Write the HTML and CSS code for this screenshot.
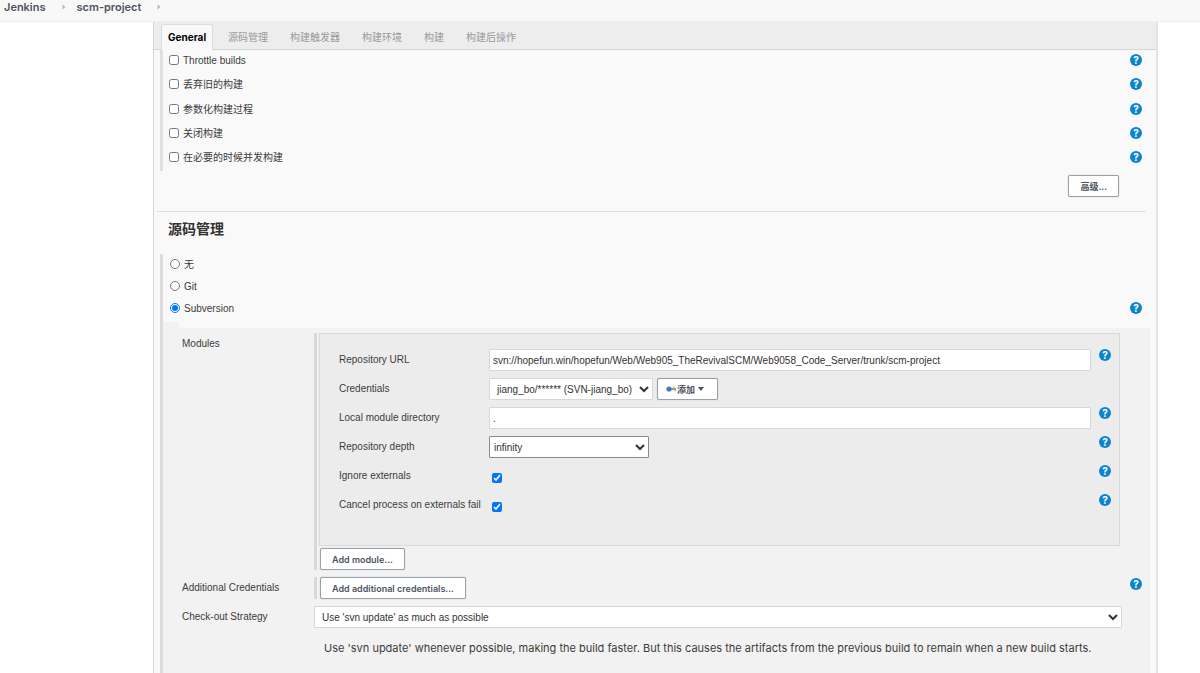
FILE: index.html
```html
<!DOCTYPE html>
<html lang="zh-CN">
  <head>
    <meta charset="UTF-8" />
    <meta name="viewport" content="width=device-width, initial-scale=1.0" />
    <title>scm-project Config [Jenkins]</title>
    <link rel="stylesheet" href="styles.css">
  </head>
  <body>
    <!-- Breadcrumbs -->
    <nav class="breadcrumbs">
      <a href="#">Jenkins</a>
      <svg class="crumb-arrow" viewBox="0 0 4 6"><path d="M0.5 0.5L3.5 3L0.5 5.5Z" /></svg>
      <a href="#">scm-project</a>
      <svg class="crumb-arrow" viewBox="0 0 4 6"><path d="M0.5 0.5L3.5 3L0.5 5.5Z" /></svg>
    </nav>

    <main class="config-panel">
      <!-- Section tabs -->
      <nav class="tab-bar">
        <a class="tab active" href="#general">General</a>
        <a class="tab" href="#scm">源码管理</a>
        <a class="tab" href="#triggers">构建触发器</a>
        <a class="tab" href="#environment">构建环境</a>
        <a class="tab" href="#build">构建</a>
        <a class="tab" href="#post-build">构建后操作</a>
      </nav>

      <!-- General -->
      <section id="general">
        <div class="option-list">
          <div class="option"><input type="checkbox" id="throttle"><label for="throttle">Throttle builds</label><a class="help" href="#">?</a></div>
          <div class="option"><input type="checkbox" id="discard"><label for="discard">丢弃旧的构建</label><a class="help" href="#">?</a></div>
          <div class="option"><input type="checkbox" id="params"><label for="params">参数化构建过程</label><a class="help" href="#">?</a></div>
          <div class="option"><input type="checkbox" id="disable"><label for="disable">关闭构建</label><a class="help" href="#">?</a></div>
          <div class="option"><input type="checkbox" id="concurrent"><label for="concurrent">在必要的时候并发构建</label><a class="help" href="#">?</a></div>
        </div>
        <div class="advanced">
          <button type="button" class="btn">高级...</button>
        </div>
      </section>

      <!-- Source code management -->
      <section id="scm" class="scm">
        <h2>源码管理</h2>
        <div class="scm-body">
          <div class="scm-choices">
            <div class="option"><input type="radio" name="scm" id="scm-none"><label for="scm-none">无</label></div>
            <div class="option"><input type="radio" name="scm" id="scm-git"><label for="scm-git">Git</label></div>
            <div class="option"><input type="radio" name="scm" id="scm-svn" checked><label for="scm-svn">Subversion</label><a class="help" href="#">?</a></div>
          </div>
          <div class="notch"></div>

          <div class="svn">
            <div class="svn-row">
              <div class="svn-label">Modules</div>
              <div class="repeated">
                <div class="module">
                  <label for="url">Repository URL</label>
                  <input class="field" type="text" id="url" value="svn://hopefun.win/hopefun/Web/Web905_TheRevivalSCM/Web9058_Code_Server/trunk/scm-project">
                  <a class="help" href="#">?</a>

                  <label for="credentials">Credentials</label>
                  <div class="credentials">
                    <select class="field wide-pad" id="credentials"><option>jiang_bo/****** (SVN-jiang_bo)</option></select>
                    <button type="button" class="btn btn-add">
                      <svg class="key" viewBox="0 0 11 8">
                        <path d="M5 3L10 3L10 6L8 5L5 5Z" fill="#8b9c94" />
                        <path d="M6 2L9 1L9.5 2.5L7 3.5Z" fill="#e9df71" />
                        <circle cx="3" cy="4" r="2.6" fill="#4179ba" />
                      </svg>添加<span class="caret"></span>
                    </button>
                  </div>
                  <span></span>

                  <label for="local">Local module directory</label>
                  <input class="field" type="text" id="local" value=".">
                  <a class="help" href="#">?</a>

                  <label for="depth">Repository depth</label>
                  <select class="field depth" id="depth"><option>infinity</option></select>
                  <a class="help" href="#">?</a>

                  <label for="ignore">Ignore externals</label>
                  <input type="checkbox" id="ignore" checked>
                  <a class="help" href="#">?</a>

                  <label for="cancel">Cancel process on externals fail</label>
                  <input type="checkbox" id="cancel" checked>
                  <a class="help" href="#">?</a>
                </div>
                <button type="button" class="btn">Add module...</button>
              </div>
            </div>

            <div class="svn-row">
              <div class="svn-label">Additional Credentials</div>
              <div class="repeated">
                <button type="button" class="btn">Add additional credentials...</button>
              </div>
              <a class="help" href="#">?</a>
            </div>

            <div class="svn-row">
              <label class="svn-label" for="strategy">Check-out Strategy</label>
              <select class="field wide-pad" id="strategy"><option>Use 'svn update' as much as possible</option></select>
            </div>
            <p class="description">Use 'svn update' whenever possible, making the build faster. But this causes the artifacts from the previous build to remain when a new build starts.</p>
          </div>
        </div>
      </section>
    </main>
  </body>
</html>
```

FILE: styles.css
```css
* {
  box-sizing: border-box;
}

body {
  margin: 0;
  min-height: 100vh;
  display: flex;
  flex-direction: column;
  background-color: #fff;
  color: #3c3c3c;
  font-family: "Liberation Sans", "Noto Sans CJK SC", sans-serif;
  font-size: 10px;
  line-height: 14px;
}

a {
  text-decoration: none;
}

/* Breadcrumbs */
.breadcrumbs {
  display: flex;
  align-items: center;
  height: 22px;
  padding: 0 4px 7px;
  background-color: #f8f8f8;
  border-bottom: 1px solid #efefef;
}

.breadcrumbs a {
  color: #4d545d;
  font-family: Inter, sans-serif;
  font-size: 11px;
  font-weight: 600;
}

.crumb-arrow {
  width: 4px;
  height: 6px;
  margin: 0 11px 0 16px;
  fill: #b4b8bc;
}

/* Main panel */
.config-panel {
  flex: 1;
  display: flex;
  flex-direction: column;
  margin: 0 42px 0 153px;
  background-color: #f9f9f9;
  border-left: 1px solid #d5d5d5;
  border-right: 2px solid #e4e4e4;
}

.tab-bar {
  display: flex;
  align-items: flex-end;
  height: 28px;
  padding-left: 7px;
  background-color: #ededed;
  border-bottom: 1px solid #d5d5d5;
}

.tab {
  padding: 8px 11px 4px;
  color: #999;
}

.tab.active {
  height: 26px;
  margin: 0 4px -1px 0;
  padding: 5px 6px;
  background-color: #f9f9f9;
  border: 1px solid #dcdcdc;
  border-bottom: none;
  border-radius: 3px 3px 0 0;
  color: #000;
  font-family: Inter, sans-serif;
  font-weight: 700;
}

/* Check box and radio rows */
.option-list {
  display: flex;
  flex-direction: column;
  justify-content: space-between;
  min-height: 121px;
  margin-left: 6px;
  padding: 0 14px 4px 6px;
  border-left: 3px solid #e0e0e0;
}

.option {
  display: flex;
  align-items: center;
  height: 20px;
}

.option label {
  padding-top: 2px;
}

.option .help {
  margin-left: auto;
}

input[type="checkbox"],
input[type="radio"] {
  width: 10px;
  height: 10px;
  margin: 0 4px 0 0;
}

.help {
  width: 12px;
  height: 12px;
  border-radius: 50%;
  background-color: #0b84cf;
  color: #fff;
  font-family: Inter, sans-serif;
  font-size: 10px;
  font-weight: 700;
  line-height: 12px;
  text-align: center;
}

.advanced {
  display: flex;
  justify-content: flex-end;
  padding: 4px 37px 14px 0;
}

/* Buttons */
.btn {
  height: 22px;
  padding: 0 11px;
  background-color: #fff;
  border: 1px solid #98a2ab;
  border-radius: 2px;
  box-shadow: 0 0 1px #98a2ab;
  color: #4d545d;
  font-family: Inter, "Noto Sans CJK SC", sans-serif;
  font-size: 9px;
  font-weight: 600;
}

.btn-add {
  display: flex;
  align-items: center;
  padding: 0 13px 0 8px;
}

.key {
  width: 11px;
  height: 8px;
}

.caret {
  margin-left: 3px;
  border: 3px solid transparent;
  border-top: 4px solid #4d545d;
  border-bottom: none;
}

/* Text boxes and drop-downs */
.field {
  width: 100%;
  height: 22px;
  padding: 0 3px;
  background-color: #fff;
  border: 1px solid #d4d8dc;
  border-radius: 1px;
  color: #333;
  font-family: inherit;
  font-size: 10px;
}

select.field {
  padding: 0;
}

select.wide-pad {
  padding: 0 0 0 3px;
}

/* Source code management */
.scm {
  flex: 1;
  display: flex;
  flex-direction: column;
  margin: 0 6px 0 3px;
}

.scm h2 {
  margin: 0 4px 0 0;
  padding: 7px 11px 15px;
  border-top: 1px solid #dfdfdf;
  color: #333;
  font-size: 14px;
  font-weight: 600;
  line-height: 20px;
}

.scm-body {
  flex: 1;
  display: flex;
  flex-direction: column;
  margin-left: 3px;
  border-left: 3px solid #dcdcdc;
}

.scm-choices {
  display: grid;
  gap: 2px;
  padding: 0 8px 4px 7px;
}

.notch {
  width: 16px;
  height: 6px;
  background-color: #f2f2f2;
}

.svn {
  flex: 1;
  padding: 5px 0 16px;
  background-color: #f2f2f2;
}

.svn-row {
  display: grid;
  grid-template-columns: 132px 1fr 28px;
  margin-bottom: 7px;
  padding-left: 19px;
}

.svn-label {
  padding-top: 4px;
}

.svn-row > .help {
  margin: 1px 0 0 8px;
}

.repeated {
  padding-left: 2px;
  border-left: 3px solid #d8d8d8;
}

.repeated .btn {
  margin-left: 1px;
}

.module {
  display: grid;
  grid-template-columns: 150px 1fr 28px;
  grid-auto-rows: 22px;
  row-gap: 7px;
  align-items: center;
  margin: 0 2px 2px 0;
  padding: 15px 0 29px 19px;
  background-color: #ececec;
  border: 1px solid #d9d9d9;
}

.module .help {
  align-self: start;
  margin-left: 8px;
}

.module input[type="checkbox"] {
  margin: 4px 0 0 3px;
}

.credentials {
  display: flex;
  gap: 4px;
}

.credentials .field {
  width: 164px;
}

.credentials .btn {
  margin-left: 0;
}

.depth {
  width: 160px;
  border-color: #8a8a8a;
}

.description {
  margin: 12px 28px 0 161px;
  font-family: Inter, sans-serif;
  font-size: 11px;
  line-height: 16px;
}
```
